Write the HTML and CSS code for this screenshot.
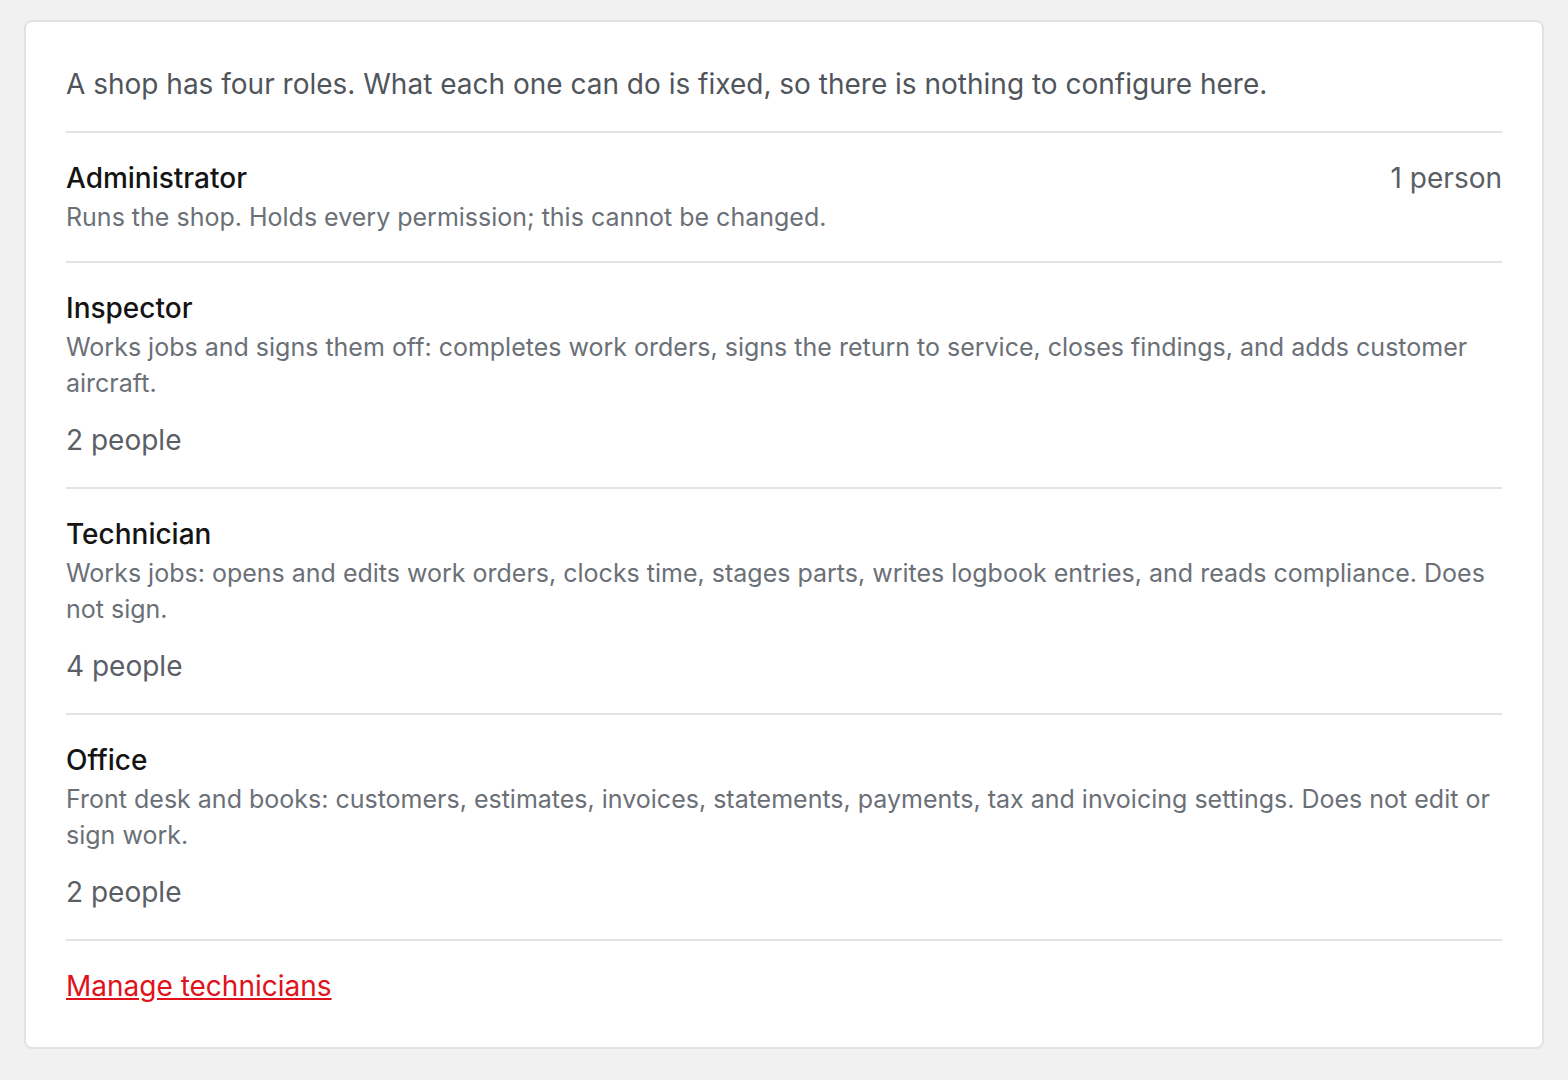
FILE: index.html
```html
<!DOCTYPE html>
<html lang="en">
<head>
<meta charset="UTF-8">
<meta name="viewport" content="width=device-width, initial-scale=1.0">
<title>Roles</title>
<link rel="stylesheet" href="styles.css">
</head>
<body>
<div class="card">
    <p class="intro">A shop has four roles. What each one can do is fixed, so there is nothing to configure here.</p>
    <ul class="roles">
        <li class="role">
            <div class="role-head">
                <span class="role-name">Administrator</span>
                <span class="role-count">1 person</span>
            </div>
            <p class="role-desc">Runs the shop. Holds every permission; this cannot be changed.</p>
        </li>
        <li class="role">
            <div class="role-head">
                <span class="role-name">Inspector</span>
            </div>
            <p class="role-desc">Works jobs and signs them off: completes work orders, signs the return to service, closes findings, and adds customer aircraft.</p>
            <p class="role-count role-count-below">2 people</p>
        </li>
        <li class="role">
            <div class="role-head">
                <span class="role-name">Technician</span>
            </div>
            <p class="role-desc">Works jobs: opens and edits work orders, clocks time, stages parts, writes logbook entries, and reads compliance. Does not sign.</p>
            <p class="role-count role-count-below">4 people</p>
        </li>
        <li class="role">
            <div class="role-head">
                <span class="role-name">Office</span>
            </div>
            <p class="role-desc">Front desk and books: customers, estimates, invoices, statements, payments, tax and invoicing settings. Does not edit or sign work.</p>
            <p class="role-count role-count-below">2 people</p>
        </li>
    </ul>
    <a class="manage-link" href="#">Manage technicians</a>
</div>
</body>
</html>
```

FILE: styles.css
```css
body {
    margin: 0;
    padding: 20px 24px 30px;
    background-color: #f1f1f1;
    font-family: Inter, "Noto Sans", sans-serif;
}
.card {
    background-color: #fff;
    border: 2px solid #e2e2e2;
    border-radius: 8px;
    padding: 44px 40px 44px;
}
.intro {
    margin: 0;
    padding-bottom: 29px;
    font-size: 28px;
    line-height: 36px;
    color: #50555c;
    border-bottom: 2px solid #e2e2e2;
}
.roles {
    list-style: none;
    margin: 0;
    padding: 0;
}
.role {
    padding: 28px 0 26px;
    border-bottom: 2px solid #e2e2e2;
}
.role-head {
    display: flex;
    justify-content: space-between;
    align-items: baseline;
}
.role-name {
    font-size: 28px;
    font-weight: 500;
    line-height: 34px;
    color: #141414;
}
.role-count {
    font-size: 28px;
    line-height: 34px;
    color: #5a5e65;
}
.role-desc {
    margin: 4px 0 0;
    font-size: 25px;
    line-height: 36px;
    color: #6b7077;
}
.role-count-below {
    margin: 22px 0 4px;
}
.manage-link {
    display: inline-block;
    margin-top: 28px;
    font-size: 28px;
    line-height: 34px;
    color: #e0121c;
}
```
